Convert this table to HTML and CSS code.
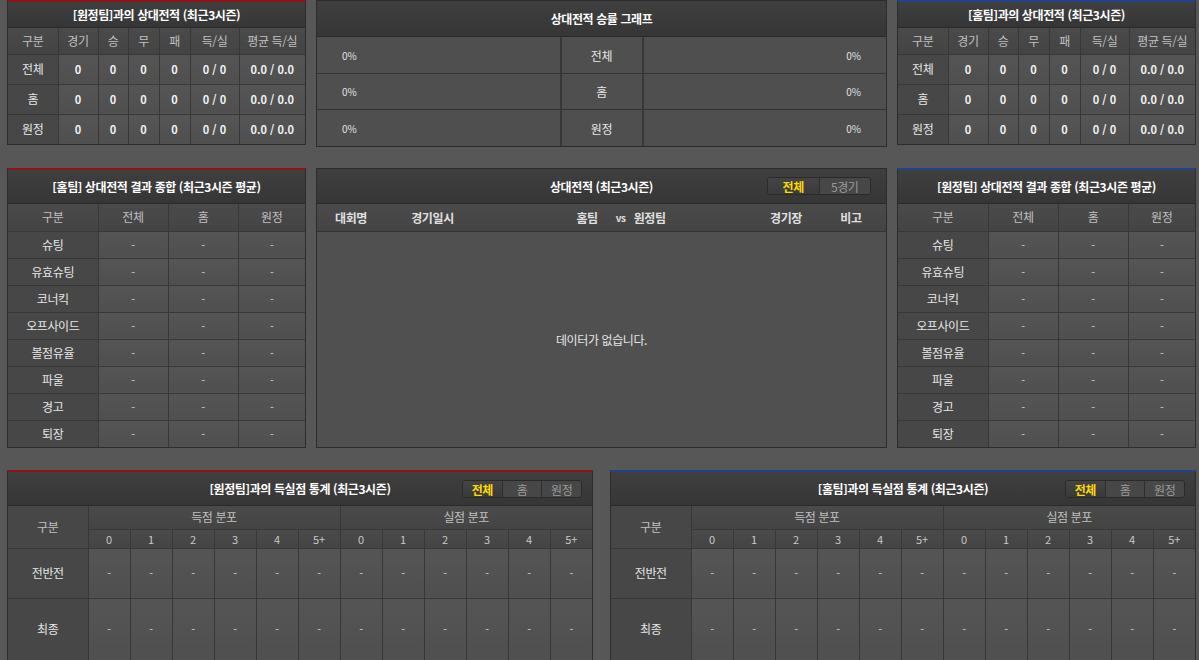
FILE: index.html
```html
<!DOCTYPE html>
<html lang="ko">
<head>
<meta charset="utf-8">
<title>상대전적</title>
<link rel="stylesheet" href="styles.css">
</head>
<body>
<div class="page">
  <div class="row row--top">
    <section class="panel panel--side panel--red">
      <div class="panel-head">[원정팀]과의 상대전적 (최근3시즌)</div>
      <table class="grid grid--record">
        <colgroup><col style="width:50px"><col style="width:40px"><col style="width:30px"><col style="width:31px"><col style="width:31px"><col style="width:49px"><col></colgroup>
        <thead><tr><th>구분</th><th>경기</th><th>승</th><th>무</th><th>패</th><th>득/실</th><th>평균 득/실</th></tr></thead>
        <tbody>
          <tr><th>전체</th><td>0</td><td>0</td><td>0</td><td>0</td><td>0 / 0</td><td>0.0 / 0.0</td></tr>
          <tr><th>홈</th><td>0</td><td>0</td><td>0</td><td>0</td><td>0 / 0</td><td>0.0 / 0.0</td></tr>
          <tr><th>원정</th><td>0</td><td>0</td><td>0</td><td>0</td><td>0 / 0</td><td>0.0 / 0.0</td></tr>
        </tbody>
      </table>
    </section>

    <section class="panel panel--center">
      <div class="panel-head panel-head--graph">상대전적 승률 그래프</div>
      <div class="bars">
        <div class="bar-row"><div class="bar-side bar-side--left">0%</div><div class="bar-label">전체</div><div class="bar-side bar-side--right">0%</div></div>
        <div class="bar-row"><div class="bar-side bar-side--left">0%</div><div class="bar-label">홈</div><div class="bar-side bar-side--right">0%</div></div>
        <div class="bar-row"><div class="bar-side bar-side--left">0%</div><div class="bar-label">원정</div><div class="bar-side bar-side--right">0%</div></div>
      </div>
    </section>

    <section class="panel panel--side panel--blue">
      <div class="panel-head">[홈팀]과의 상대전적 (최근3시즌)</div>
      <table class="grid grid--record">
        <colgroup><col style="width:50px"><col style="width:40px"><col style="width:30px"><col style="width:31px"><col style="width:31px"><col style="width:49px"><col></colgroup>
        <thead><tr><th>구분</th><th>경기</th><th>승</th><th>무</th><th>패</th><th>득/실</th><th>평균 득/실</th></tr></thead>
        <tbody>
          <tr><th>전체</th><td>0</td><td>0</td><td>0</td><td>0</td><td>0 / 0</td><td>0.0 / 0.0</td></tr>
          <tr><th>홈</th><td>0</td><td>0</td><td>0</td><td>0</td><td>0 / 0</td><td>0.0 / 0.0</td></tr>
          <tr><th>원정</th><td>0</td><td>0</td><td>0</td><td>0</td><td>0 / 0</td><td>0.0 / 0.0</td></tr>
        </tbody>
      </table>
    </section>
  </div>

  <div class="row row--mid">
    <section class="panel panel--side panel--red">
      <div class="panel-head panel-head--tall">[홈팀] 상대전적 결과 종합 (최근3시즌 평균)</div>
      <table class="grid grid--summary">
        <colgroup><col style="width:90px"><col style="width:70px"><col style="width:70px"><col></colgroup>
        <thead><tr><th>구분</th><th>전체</th><th>홈</th><th>원정</th></tr></thead>
        <tbody>
          <tr><th>슈팅</th><td>-</td><td>-</td><td>-</td></tr>
          <tr><th>유효슈팅</th><td>-</td><td>-</td><td>-</td></tr>
          <tr><th>코너킥</th><td>-</td><td>-</td><td>-</td></tr>
          <tr><th>오프사이드</th><td>-</td><td>-</td><td>-</td></tr>
          <tr><th>볼점유율</th><td>-</td><td>-</td><td>-</td></tr>
          <tr><th>파울</th><td>-</td><td>-</td><td>-</td></tr>
          <tr><th>경고</th><td>-</td><td>-</td><td>-</td></tr>
          <tr><th>퇴장</th><td>-</td><td>-</td><td>-</td></tr>
        </tbody>
      </table>
    </section>

    <section class="panel panel--center panel--matches">
      <div class="panel-head panel-head--tall panel-head--tools">
        <span class="panel-title">상대전적 (최근3시즌)</span>
        <div class="toggle toggle--two"><span class="toggle-btn is-active">전체</span><span class="toggle-btn">5경기</span></div>
      </div>
      <div class="match-head">
        <span>대회명</span><span>경기일시</span><span class="match-teams">홈팀<span class="vs">vs</span>원정팀</span><span>경기장</span><span>비고</span>
      </div>
      <div class="match-empty">데이터가 없습니다.</div>
    </section>

    <section class="panel panel--side panel--blue">
      <div class="panel-head panel-head--tall">[원정팀] 상대전적 결과 종합 (최근3시즌 평균)</div>
      <table class="grid grid--summary">
        <colgroup><col style="width:90px"><col style="width:70px"><col style="width:70px"><col></colgroup>
        <thead><tr><th>구분</th><th>전체</th><th>홈</th><th>원정</th></tr></thead>
        <tbody>
          <tr><th>슈팅</th><td>-</td><td>-</td><td>-</td></tr>
          <tr><th>유효슈팅</th><td>-</td><td>-</td><td>-</td></tr>
          <tr><th>코너킥</th><td>-</td><td>-</td><td>-</td></tr>
          <tr><th>오프사이드</th><td>-</td><td>-</td><td>-</td></tr>
          <tr><th>볼점유율</th><td>-</td><td>-</td><td>-</td></tr>
          <tr><th>파울</th><td>-</td><td>-</td><td>-</td></tr>
          <tr><th>경고</th><td>-</td><td>-</td><td>-</td></tr>
          <tr><th>퇴장</th><td>-</td><td>-</td><td>-</td></tr>
        </tbody>
      </table>
    </section>
  </div>

  <div class="row row--bottom">
    <section class="panel panel--half panel--red">
      <div class="panel-head panel-head--tall panel-head--tools">
        <span class="panel-title">[원정팀]과의 득실점 통계 (최근3시즌)</span>
        <div class="toggle toggle--three"><span class="toggle-btn is-active">전체</span><span class="toggle-btn">홈</span><span class="toggle-btn">원정</span></div>
      </div>
      <table class="grid grid--goals">
        <colgroup><col style="width:80px"><col><col><col><col><col><col><col><col><col><col><col><col></colgroup>
        <thead>
          <tr class="goals-group"><th rowspan="2" class="goals-label">구분</th><th colspan="6">득점 분포</th><th colspan="6">실점 분포</th></tr>
          <tr class="goals-num"><th>0</th><th>1</th><th>2</th><th>3</th><th>4</th><th>5+</th><th>0</th><th>1</th><th>2</th><th>3</th><th>4</th><th>5+</th></tr>
        </thead>
        <tbody>
          <tr class="goals-row"><th>전반전</th><td>-</td><td>-</td><td>-</td><td>-</td><td>-</td><td>-</td><td>-</td><td>-</td><td>-</td><td>-</td><td>-</td><td>-</td></tr>
          <tr class="goals-row goals-row--final"><th>최종</th><td>-</td><td>-</td><td>-</td><td>-</td><td>-</td><td>-</td><td>-</td><td>-</td><td>-</td><td>-</td><td>-</td><td>-</td></tr>
        </tbody>
      </table>
    </section>

    <section class="panel panel--half panel--blue">
      <div class="panel-head panel-head--tall panel-head--tools">
        <span class="panel-title">[홈팀]과의 득실점 통계 (최근3시즌)</span>
        <div class="toggle toggle--three"><span class="toggle-btn is-active">전체</span><span class="toggle-btn">홈</span><span class="toggle-btn">원정</span></div>
      </div>
      <table class="grid grid--goals">
        <colgroup><col style="width:80px"><col><col><col><col><col><col><col><col><col><col><col><col></colgroup>
        <thead>
          <tr class="goals-group"><th rowspan="2" class="goals-label">구분</th><th colspan="6">득점 분포</th><th colspan="6">실점 분포</th></tr>
          <tr class="goals-num"><th>0</th><th>1</th><th>2</th><th>3</th><th>4</th><th>5+</th><th>0</th><th>1</th><th>2</th><th>3</th><th>4</th><th>5+</th></tr>
        </thead>
        <tbody>
          <tr class="goals-row"><th>전반전</th><td>-</td><td>-</td><td>-</td><td>-</td><td>-</td><td>-</td><td>-</td><td>-</td><td>-</td><td>-</td><td>-</td><td>-</td></tr>
          <tr class="goals-row goals-row--final"><th>최종</th><td>-</td><td>-</td><td>-</td><td>-</td><td>-</td><td>-</td><td>-</td><td>-</td><td>-</td><td>-</td><td>-</td><td>-</td></tr>
        </tbody>
      </table>
    </section>
  </div>
</div>
</body>
</html>
```

FILE: styles.css
```css
* { box-sizing: border-box; }

html, body {
  margin: 0;
  padding: 0;
  background: #575757;
  overflow: hidden;
}

body {
  font-family: "Noto Sans CJK KR", "Noto Sans", "Liberation Sans", sans-serif;
  font-size: 12px;
  color: #dddddd;
  letter-spacing: -0.4px;
}

.page {
  padding: 0 3px 0 7px;
  display: flex;
  flex-direction: column;
}

.row {
  display: flex;
  align-items: flex-start;
  gap: 10px;
}

.row--mid { margin-top: 21px; }
.row--bottom { margin-top: 22px; gap: 17px; }

.panel {
  background: #505050;
  border: 1px solid #2c2c2c;
}

.panel--side { width: 299px; }
.panel--center { width: 571px; }
.panel--half { width: 586px; }

.panel--red { border-top: 2px solid #8c1414; }
.panel--blue { border-top: 2px solid #23428c; }

.panel-head {
  height: 26px;
  display: flex;
  align-items: center;
  justify-content: center;
  background: linear-gradient(#3f3f3f, #363636);
  border-bottom: 1px solid #2a2a2a;
  color: #ffffff;
  font-weight: bold;
  font-size: 12px;
}

.panel-head--tall { height: 34px; }
.panel-head--graph { height: 36px; }

.panel-head--tools {
  position: relative;
}

/* tables */
.grid {
  width: 100%;
  table-layout: fixed;
  border-collapse: collapse;
  border-style: hidden;
}

.grid th,
.grid td {
  border: 1px solid #383838;
  padding: 0;
  text-align: center;
  vertical-align: middle;
  line-height: 14px;
}

.grid thead th {
  background: linear-gradient(#4a4a4a, #444444);
  color: #c0c0c0;
  font-weight: normal;
}

.grid tbody th {
  background: #474747;
  color: #e6e6e6;
  font-weight: normal;
}

.grid tbody td {
  background: linear-gradient(#555555, #4f4f4f);
  color: #f0f0f0;
}

.grid--record thead th { height: 26px; }
.grid--record tbody th,
.grid--record tbody td { height: 30px; }
.grid--record tbody td { font-weight: bold; font-size: 11px; letter-spacing: 0; }

.grid--summary thead th { height: 27px; }
.grid--summary tbody th,
.grid--summary tbody td { height: 27px; }
.grid--summary tbody td { color: #cfcfcf; font-size: 11px; }

.grid--goals .goals-group th { height: 23px; }
.grid--goals .goals-num th { height: 19px; color: #c8c8c8; font-size: 11px; letter-spacing: 0; }
.grid--goals thead th.goals-label { background: #474747; }
.grid--goals .goals-row th,
.grid--goals .goals-row td { height: 50px; }
.grid--goals .goals-row--final th,
.grid--goals .goals-row--final td { height: 62px; }
.grid--goals tbody td { color: #cfcfcf; font-size: 11px; }

/* win-rate bars */
.bars {
  display: flex;
  flex-direction: column;
}

.bar-row {
  display: flex;
  height: 36px;
  border-bottom: 1px solid #333333;
  background: #4f4f4f;
}

.bar-row:first-child { height: 37px; }
.bar-row:last-child { border-bottom: 0; }

.bar-side {
  flex: 1;
  display: flex;
  align-items: center;
  font-size: 10px;
  color: #e0e0e0;
  letter-spacing: 0;
}

.bar-side--left {
  padding-left: 25px;
  border-right: 2px solid #383838;
}

.bar-side--right {
  justify-content: flex-end;
  padding-right: 25px;
  border-left: 2px solid #383838;
}

.bar-label {
  width: 80px;
  display: flex;
  align-items: center;
  justify-content: center;
  color: #e6e6e6;
}

/* match list */
.panel--matches {
  height: 280px;
  display: flex;
  flex-direction: column;
  border-top-width: 1px;
}

.panel--matches > .panel-head--tall { height: 35px; }

.match-head {
  display: grid;
  grid-template-columns: 68px 95px 1fr 60px 70px;
  height: 28px;
  align-items: center;
  background: linear-gradient(#4a4a4a, #444444);
  border-bottom: 1px solid #333333;
  color: #e0e0e0;
  font-weight: bold;
  text-align: center;
}

.match-teams {
  display: flex;
  justify-content: center;
  align-items: center;
  padding-left: 6px;
}

.vs {
  font-size: 10px;
  margin: 0 8px 0 18px;
}

.match-empty {
  flex: 1;
  display: flex;
  align-items: center;
  justify-content: center;
  color: #e6e6e6;
  background: #505050;
}

/* toggles */
.toggle {
  position: absolute;
  top: 8px;
  display: flex;
  height: 18px;
  border: 1px solid #2a2a2a;
  border-radius: 3px;
  background: #474747;
  overflow: hidden;
}

.toggle--two { right: 15px; width: 104px; }
.toggle--three { right: 10px; width: 120px; }

.toggle-btn {
  flex: 1;
  display: flex;
  align-items: center;
  justify-content: center;
  color: #9a9a9a;
  font-weight: normal;
  font-size: 12px;
  border-left: 1px solid #2e2e2e;
}

.toggle-btn:first-child { border-left: 0; }

.toggle-btn.is-active {
  background: linear-gradient(#444444, #3a3a3a);
  color: #ffd800;
  font-weight: bold;
}
```
